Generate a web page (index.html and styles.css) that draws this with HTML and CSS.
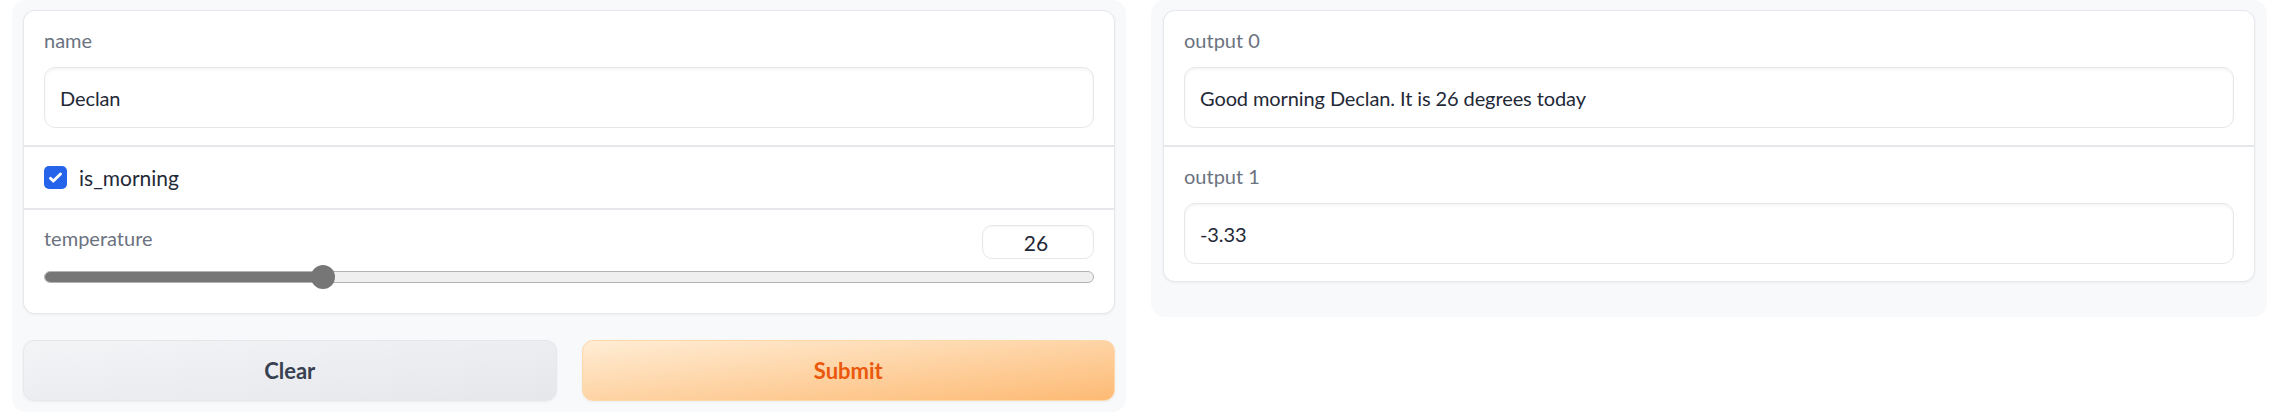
FILE: index.html
```html
<!DOCTYPE html>
<html>
<head>
<meta charset="utf-8">
<link rel="stylesheet" href="styles.css">
</head>
<body>
<div class="app">
  <div class="panel panel-in">
    <div class="card">
      <div class="block">
        <div class="lbl">name</div>
        <div class="field">Declan</div>
      </div>
      <div class="block check-block">
        <span class="cb"><svg viewBox="0 0 16 16" width="23" height="23"><path fill="#fff" d="M12.207 4.793a1 1 0 010 1.414l-5 5a1 1 0 01-1.414 0l-2-2a1 1 0 011.414-1.414L6.5 9.086l4.293-4.293a1 1 0 011.414 0z"/></svg></span>
        <span class="cb-label">is_morning</span>
      </div>
      <div class="block slider-block">
        <div class="slider-head">
          <span class="lbl">temperature</span>
          <div class="num">26</div>
        </div>
        <div class="slider">
          <div class="track"><div class="fill" style="width: 279px"></div></div>
          <div class="thumb" style="left: 267px"></div>
        </div>
      </div>
    </div>
    <div class="btn-row">
      <button class="btn secondary">Clear</button>
      <button class="btn primary">Submit</button>
    </div>
  </div>
  <div class="panel panel-out">
    <div class="card">
      <div class="block">
        <div class="lbl">output 0</div>
        <div class="field">Good morning Declan. It is 26 degrees today</div>
      </div>
      <div class="block">
        <div class="lbl">output 1</div>
        <div class="field">-3.33</div>
      </div>
    </div>
  </div>
</div>
</body>
</html>
```

FILE: styles.css
```css
* { box-sizing: border-box; }
body {
  margin: 0;
  background: #ffffff;
  font-family: "Lato", "Noto Sans", sans-serif;
  color: #1f2937;
}
.app {
  display: flex;
  align-items: flex-start;
  gap: 25px;
  padding: 0 15px 0 12px;
}
.panel {
  flex: 1;
  background: #f8f9fb;
  border-radius: 14px;
  display: flex;
  flex-direction: column;
  gap: 26px;
}
.panel-in { padding: 10px 11px 11px; }
.panel-out { padding: 10px 12px 35px; }
.card {
  background: #e5e7eb;
  border: 1px solid #e5e7eb;
  border-radius: 12px;
  overflow: hidden;
  display: flex;
  flex-direction: column;
  gap: 2px;
  box-shadow: 0 1px 3px rgba(0,0,0,0.05);
}
.block {
  background: #fff;
  padding: 17px 20px 17px 20px;
  display: flex;
  flex-direction: column;
}
.lbl {
  font-size: 20px;
  line-height: 24px;
  color: #6b7280;
  margin-bottom: 15px;
}
.field {
  height: 61px;
  border: 1px solid #e5e7eb;
  border-radius: 11px;
  box-shadow: inset 0 2px 3px rgba(0,0,0,0.04);
  padding: 0 15px;
  display: flex;
  align-items: center;
  font-size: 20px;
  letter-spacing: -0.1px;
  color: #1f2937;
}
.check-block {
  flex-direction: row;
  align-items: center;
  padding-top: 19px;
  padding-bottom: 19px;
  gap: 12px;
}
.cb {
  width: 23px;
  height: 23px;
  border-radius: 5px;
  background: #2563eb;
  display: flex;
}
.cb-label {
  font-size: 21px;
  line-height: 23px;
  color: #1f2937;
}
.slider-block {
  padding-top: 15px;
  padding-bottom: 24px;
}
.slider-head {
  display: flex;
  justify-content: space-between;
  align-items: flex-start;
}
.slider-head .lbl {
  margin: 0;
  line-height: 26px;
}
.num {
  width: 112px;
  height: 34px;
  border: 1px solid #e5e7eb;
  border-radius: 10px;
  box-shadow: inset 0 1px 2px rgba(0,0,0,0.04);
  display: flex;
  align-items: center;
  justify-content: center;
  font-size: 21px;
  padding-right: 4px;
  color: #1f2937;
}
.slider {
  position: relative;
  height: 24px;
  margin-top: 6px;
  display: flex;
  align-items: center;
}
.track {
  flex: 1;
  height: 12px;
  border: 1px solid #b3b3b3;
  background: #efefef;
  border-radius: 6px;
  overflow: hidden;
  display: flex;
}
.fill {
  background: #767676;
  height: 100%;
}
.thumb {
  position: absolute;
  top: 0;
  width: 24px;
  height: 24px;
  border-radius: 50%;
  background: #767676;
}
.btn-row {
  display: flex;
  gap: 25px;
}
.btn {
  flex: 1;
  height: 61px;
  border-radius: 11px;
  font-family: inherit;
  font-size: 22px;
  font-weight: 700;
  cursor: pointer;
  box-shadow: 0 1px 3px rgba(0,0,0,0.05);
}
.secondary {
  background: linear-gradient(to bottom right, #f3f4f6, #e5e7eb);
  border: 1px solid #e5e7eb;
  color: #374151;
}
.primary {
  background: linear-gradient(to bottom right, #ffedd5, #fdba74);
  border: 1px solid #fed7aa;
  color: #ea580c;
}
```
